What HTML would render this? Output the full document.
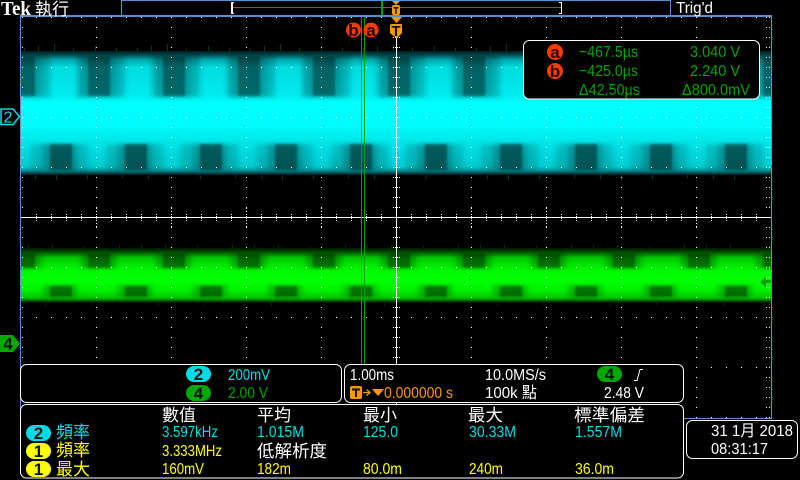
<!DOCTYPE html>
<html lang="zh-Hant">
<head>
<meta charset="utf-8">
<title>Tek</title>
<style>
html,body{margin:0;padding:0;background:#000;width:800px;height:480px;overflow:hidden}
svg{display:block}
text{font-family:"Liberation Sans","Noto Sans CJK TC",sans-serif;font-size:16px}
.c{font-family:"Noto Sans CJK TC","Liberation Sans",sans-serif;font-size:17px}
.w{fill:#fff}.y{fill:#ff0}.b{fill:#00dce6}.g{fill:#00a400}.o{fill:#ff9900}
.k{fill:#001410;font-weight:bold;text-anchor:middle;font-size:17px}
.p{fill:#000;stroke:#fff;stroke-width:1}
</style>
</head>
<body>
<svg width="800" height="480" viewBox="0 0 800 480" xmlns="http://www.w3.org/2000/svg">
<defs>
<linearGradient id="cy" x1="0" y1="0" x2="0" y2="1">
<stop offset="0" stop-color="#001c20"/><stop offset=".03" stop-color="#004a50"/><stop offset=".07" stop-color="#00a8ac"/>
<stop offset=".13" stop-color="#00dce0"/><stop offset=".36" stop-color="#00ecf0"/><stop offset=".42" stop-color="#00ffff"/>
<stop offset=".6" stop-color="#00fcfc"/><stop offset=".76" stop-color="#00e2e6"/><stop offset=".93" stop-color="#00ccd0"/>
<stop offset=".96" stop-color="#009ca0"/><stop offset=".98" stop-color="#005a60"/><stop offset="1" stop-color="#001a1e"/>
</linearGradient>
<linearGradient id="gr" x1="0" y1="0" x2="0" y2="1">
<stop offset="0" stop-color="#001a00"/><stop offset=".05" stop-color="#003c00"/><stop offset=".1" stop-color="#007000"/>
<stop offset=".18" stop-color="#00c800"/><stop offset=".3" stop-color="#00e600"/><stop offset=".42" stop-color="#00fa00"/>
<stop offset=".62" stop-color="#00ff00"/><stop offset=".78" stop-color="#00ee00"/><stop offset=".9" stop-color="#00c800"/>
<stop offset=".94" stop-color="#008c00"/><stop offset=".97" stop-color="#003c00"/><stop offset="1" stop-color="#001400"/>
</linearGradient>
<filter id="soft" x="-5%" y="-10%" width="110%" height="120%"><feGaussianBlur stdDeviation="3 2"/></filter>
<filter id="soft2" x="-5%" y="-10%" width="110%" height="120%"><feGaussianBlur stdDeviation="1 1"/></filter>
<clipPath id="cb"><rect x="21" y="44" width="750" height="264"/></clipPath>
<pattern id="wch" patternUnits="userSpaceOnUse" x="13" y="51" width="75" height="124">
<rect x="0" y="4" width="28" height="42" opacity=".32"/>
<rect x="68" y="4" width="7" height="42" opacity=".32"/>
<rect x="28" y="4" width="9" height="42" opacity=".2"/>
<rect x="64" y="4" width="4" height="42" opacity=".22"/>
<rect x="30" y="93" width="34" height="26" opacity=".32"/>
<rect x="18" y="93" width="12" height="26" opacity=".14"/>
<rect x="64" y="93" width="11" height="26" opacity=".14"/>
</pattern>
<pattern id="wcc" patternUnits="userSpaceOnUse" x="13" y="51" width="75" height="124">
<rect x="0" y="6" width="22" height="39" opacity=".35"/>
<rect x="37" y="93" width="22" height="26" opacity=".4"/>
</pattern>
<pattern id="wgh" patternUnits="userSpaceOnUse" x="13" y="248" width="75" height="55">
<rect x="0" y="5" width="28" height="15" opacity=".25"/>
<rect x="68" y="5" width="7" height="15" opacity=".25"/>
<rect x="30" y="37" width="34" height="12" opacity=".22"/>
</pattern>
<pattern id="wgc" patternUnits="userSpaceOnUse" x="13" y="248" width="75" height="55">
<rect x="0" y="6" width="22" height="14" opacity=".35"/>
<rect x="37" y="38" width="22" height="11" opacity=".38"/>
</pattern>
<pattern id="sp" patternUnits="userSpaceOnUse" x="21" y="0" width="113" height="480">
<path d="M3.500 48V52M17.500 46V52M33.500 44V52M52.500 48V52M74.500 46V52M95.500 48V52" stroke="#00383c" fill="none"/>
<path d="M14.500 174V179M35.500 174V180M66.500 174V179M101.500 174V178" stroke="#00383c" fill="none"/>
<path d="M7.500 245V250M31.500 245V250M63.500 246V250M98.500 245V250" stroke="#003000" fill="none"/>
<path d="M24.500 302V306M70.500 302V305" stroke="#003000" fill="none"/>
</pattern>
<pattern id="dc" patternUnits="userSpaceOnUse" x="21" y="17" width="75" height="10"><rect width="1" height="1" fill="#fff"/></pattern>
<pattern id="dr" patternUnits="userSpaceOnUse" x="21" y="17" width="15" height="50"><rect width="1" height="1" fill="#fff"/></pattern>
<pattern id="de" patternUnits="userSpaceOnUse" x="22" y="17" width="3" height="10"><rect width="1" height="1" fill="#fff"/></pattern>
<pattern id="t1" patternUnits="userSpaceOnUse" x="21" y="214" width="15" height="2"><rect width="1" height="1" fill="#fff"/></pattern>
<pattern id="t2" patternUnits="userSpaceOnUse" x="21" y="208" width="75" height="3"><rect width="1" height="1" fill="#fff"/></pattern>
<pattern id="t3" patternUnits="userSpaceOnUse" x="393" y="17" width="2" height="10"><rect width="1" height="1" fill="#fff"/></pattern>
</defs>

<rect width="800" height="480" fill="#000"/>

<!-- waveforms -->
<g clip-path="url(#cb)">
<rect x="21" y="44" width="750" height="264" fill="url(#sp)"/>
<rect x="21" y="51" width="750" height="124" fill="url(#cy)"/>
<rect x="0" y="51" width="800" height="124" fill="url(#wch)" filter="url(#soft)"/>
<rect x="0" y="51" width="800" height="124" fill="url(#wcc)" filter="url(#soft2)"/>
<rect x="21" y="248" width="750" height="55" fill="url(#gr)"/>
<rect x="0" y="248" width="800" height="55" fill="url(#wgh)" filter="url(#soft)"/>
<rect x="0" y="248" width="800" height="55" fill="url(#wgc)" filter="url(#soft2)"/>
</g>
<g shape-rendering="crispEdges">
<path d="M760 282L766 276V280H771V283H766V288Z" fill="#00a000"/>

<!-- graticule -->
<rect x="22" y="17" width="749" height="401" fill="url(#dc)"/>
<rect x="22" y="17" width="749" height="401" fill="url(#dr)"/>
<rect x="22" y="17" width="3" height="401" fill="url(#de)"/>
<rect x="766" y="17" width="5" height="401" fill="url(#de)"/>
<rect x="22" y="214" width="749" height="7" fill="url(#t1)"/>
<rect x="22" y="208" width="749" height="20" fill="url(#t2)"/>
<rect x="393" y="20" width="7" height="398" fill="url(#t3)"/>
<rect x="21" y="217" width="750" height="1" fill="#fff"/>
<rect x="396" y="38" width="1" height="380" fill="#fff"/>

<!-- cursors -->
<rect x="361" y="17" width="1" height="401" fill="#00a000"/>
<rect x="364" y="17" width="1" height="401" fill="#00a000"/>

<!-- frame -->
<rect x="20" y="15" width="752" height="2" fill="#5b8fd0"/>
<rect x="20" y="15" width="1" height="404" fill="#5b8fd0"/>
<rect x="771" y="15" width="1" height="404" fill="#5b8fd0"/>
<rect x="20" y="418" width="752" height="1" fill="#5b8fd0"/>

<!-- top bar -->
<rect x="121" y="0" width="550" height="15" fill="#000"/>
<rect x="121" y="0" width="550" height="1" fill="#5b8fd0"/>
<rect x="121" y="0" width="1" height="16" fill="#5b8fd0"/>
<rect x="670" y="0" width="1" height="16" fill="#5b8fd0"/>
<rect x="233" y="7" width="328" height="1" fill="#00a000"/>
<rect x="381" y="1" width="2" height="14" fill="#00a000"/>
<path d="M234 2H231V14H234V13H233V3H234ZM559 2H562V14H559V13H561V3H559Z" fill="#fff"/>
</g>

<!-- trigger markers -->
<path d="M392 1H400L396 5Z" fill="#ff9900"/>
<rect x="392" y="5" width="8" height="10" rx="2" fill="#ff9900"/>
<path d="M393.500 7H398.500V8.500H396.700V14H395.300V8.500H393.500Z" fill="#1a0c00"/>
<path d="M391 17H402L396.500 23Z" fill="#ff9900"/>
<path d="M392 24H401Q402 24 402 26V33L398 37L396.500 38.500L395 37L390 33V26Q390 24 392 24Z" fill="#ff9900"/>
<text x="396" y="36" class="k" style="font-size:15px" fill="#1a0c00">T</text>

<circle cx="353.500" cy="30" r="7.500" fill="#ff3c00"/>
<circle cx="371" cy="30" r="7.500" fill="#ff3c00"/>
<text x="353.500" y="36" class="k" style="fill:#200">b</text>
<text x="371" y="36" class="k" style="fill:#200">a</text>

<!-- header text -->
<text x="1" y="15" textLength="30" lengthAdjust="spacingAndGlyphs" class="w" style="font-family:'Liberation Serif',serif;font-weight:bold;font-size:20px">Tek</text>
<text x="35" y="15" textLength="34" lengthAdjust="spacingAndGlyphs" class="w c">執行</text>
<text x="676" y="13" textLength="37" lengthAdjust="spacingAndGlyphs" class="w">Trig'd</text>

<!-- channel markers -->
<path d="M1 109H13L19.500 116.500L13 124.500H1Z" fill="#000" stroke="#00dce6" stroke-width="1.500"/>
<text x="8" y="122.500" class="b" style="text-anchor:middle;font-size:16px">2</text>
<path d="M0 335H13L20 343.500L13 352H0Z" fill="#00a800"/>
<text x="8" y="349.500" class="k" fill="#001">4</text>

<!-- cursor readout -->
<rect x="523.500" y="40.500" width="236" height="58.500" rx="6" class="p"/>
<circle cx="555" cy="52" r="8" fill="#ff3c00"/>
<circle cx="555" cy="71" r="8" fill="#ff3c00"/>
<text x="555" y="58" class="k" style="fill:#200">a</text>
<text x="555" y="77" class="k" style="fill:#200">b</text>
<text x="579" y="57" textLength="59" lengthAdjust="spacingAndGlyphs" class="g">−467.5µs</text>
<text x="690" y="57" textLength="50" lengthAdjust="spacingAndGlyphs" class="g">3.040 V</text>
<text x="579" y="76" textLength="59" lengthAdjust="spacingAndGlyphs" class="g">−425.0µs</text>
<text x="690" y="76" textLength="50" lengthAdjust="spacingAndGlyphs" class="g">2.240 V</text>
<text x="579" y="95" textLength="61" lengthAdjust="spacingAndGlyphs" class="g">Δ42.50µs</text>
<text x="682" y="95" textLength="68" lengthAdjust="spacingAndGlyphs" class="g">Δ800.0mV</text>

<!-- bottom area -->
<rect x="0" y="364" width="20" height="116" fill="#000"/>
<rect x="20.500" y="364.500" width="321" height="38" rx="6" class="p"/>
<rect x="344.500" y="364.500" width="339" height="38" rx="6" class="p"/>
<rect x="20.500" y="404.500" width="663" height="73.500" rx="6" class="p"/>
<rect x="686.500" y="420.500" width="111" height="38" rx="6" class="p"/>

<!-- panel 1 -->
<rect x="186" y="366" width="25" height="16" rx="8" fill="#00dce6"/>
<text x="198.500" y="380" class="k">2</text>
<text x="228" y="380" textLength="42" lengthAdjust="spacingAndGlyphs" class="b">200mV</text>
<rect x="186" y="385" width="25" height="16" rx="8" fill="#00a800"/>
<text x="198.500" y="399" class="k">4</text>
<text x="228" y="398" textLength="40" lengthAdjust="spacingAndGlyphs" class="g">2.00 V</text>

<!-- panel 2 -->
<text x="350" y="380" textLength="44" lengthAdjust="spacingAndGlyphs" class="w">1.00ms</text>
<text x="485" y="380" textLength="61" lengthAdjust="spacingAndGlyphs" class="w">10.0MS/s</text>
<rect x="597" y="366" width="25" height="16" rx="8" fill="#00a800"/>
<text x="609.500" y="380" class="k">4</text>
<path d="M634 380.500H637L640 369.500H643" stroke="#fff" fill="none"/>
<rect x="350" y="386" width="12" height="13" rx="2" fill="#ff9900"/>
<path d="M352 388.500H360V390.500H357V397H355V390.500H352Z" fill="#1a0c00"/>
<path d="M363 392.500H369M366.500 389.500L370 392.500L366.500 395.500" stroke="#ff9900" stroke-width="1.300" fill="none"/>
<path d="M372 389H384L378 396Z" fill="#ff9900"/>
<text x="384" y="398" textLength="69" lengthAdjust="spacingAndGlyphs" class="o">0.000000 s</text>
<text x="485" y="398" textLength="52" lengthAdjust="spacingAndGlyphs" class="w">100k 點</text>
<text x="604" y="398" textLength="40" lengthAdjust="spacingAndGlyphs" class="w">2.48 V</text>

<!-- panel 3 headers -->
<text x="162" y="421" textLength="34" lengthAdjust="spacingAndGlyphs" class="w c">數值</text>
<text x="257" y="421" textLength="34" lengthAdjust="spacingAndGlyphs" class="w c">平均</text>
<text x="363" y="421" textLength="34" lengthAdjust="spacingAndGlyphs" class="w c">最小</text>
<text x="468" y="421" textLength="35" lengthAdjust="spacingAndGlyphs" class="w c">最大</text>
<text x="574" y="421" textLength="71" lengthAdjust="spacingAndGlyphs" class="w c">標準偏差</text>

<!-- row 1 -->
<rect x="26" y="425" width="25" height="16" rx="8" fill="#00dce6"/>
<text x="38.500" y="439" class="k">2</text>
<text x="56" y="438" textLength="34" lengthAdjust="spacingAndGlyphs" class="b c">頻率</text>
<text x="162" y="437" textLength="56" lengthAdjust="spacingAndGlyphs" class="b">3.597kHz</text>
<text x="257" y="437" textLength="47" lengthAdjust="spacingAndGlyphs" class="b">1.015M</text>
<text x="363" y="437" textLength="35" lengthAdjust="spacingAndGlyphs" class="b">125.0</text>
<text x="469" y="437" textLength="47" lengthAdjust="spacingAndGlyphs" class="b">30.33M</text>
<text x="575" y="437" textLength="47" lengthAdjust="spacingAndGlyphs" class="b">1.557M</text>

<!-- row 2 -->
<rect x="26" y="443" width="25" height="16" rx="8" fill="#ffff00"/>
<text x="38.500" y="457" class="k">1</text>
<text x="56" y="456" textLength="34" lengthAdjust="spacingAndGlyphs" class="y c">頻率</text>
<text x="162" y="456" textLength="60" lengthAdjust="spacingAndGlyphs" class="y">3.333MHz</text>
<text x="257" y="457" textLength="70" lengthAdjust="spacingAndGlyphs" class="w c">低解析度</text>

<!-- row 3 -->
<rect x="26" y="461" width="25" height="16" rx="8" fill="#ffff00"/>
<text x="38.500" y="475" class="k">1</text>
<text x="56" y="475" textLength="34" lengthAdjust="spacingAndGlyphs" class="y c">最大</text>
<text x="162" y="474" textLength="42" lengthAdjust="spacingAndGlyphs" class="y">160mV</text>
<text x="257" y="474" textLength="34" lengthAdjust="spacingAndGlyphs" class="y">182m</text>
<text x="363" y="474" textLength="39" lengthAdjust="spacingAndGlyphs" class="y">80.0m</text>
<text x="469" y="474" textLength="34" lengthAdjust="spacingAndGlyphs" class="y">240m</text>
<text x="575" y="474" textLength="39" lengthAdjust="spacingAndGlyphs" class="y">36.0m</text>

<!-- date -->
<text x="711" y="436" textLength="82" lengthAdjust="spacingAndGlyphs" class="w">31 1月 2018</text>
<text x="711" y="454" textLength="57" lengthAdjust="spacingAndGlyphs" class="w">08:31:17</text>
</svg>
</body>
</html>
